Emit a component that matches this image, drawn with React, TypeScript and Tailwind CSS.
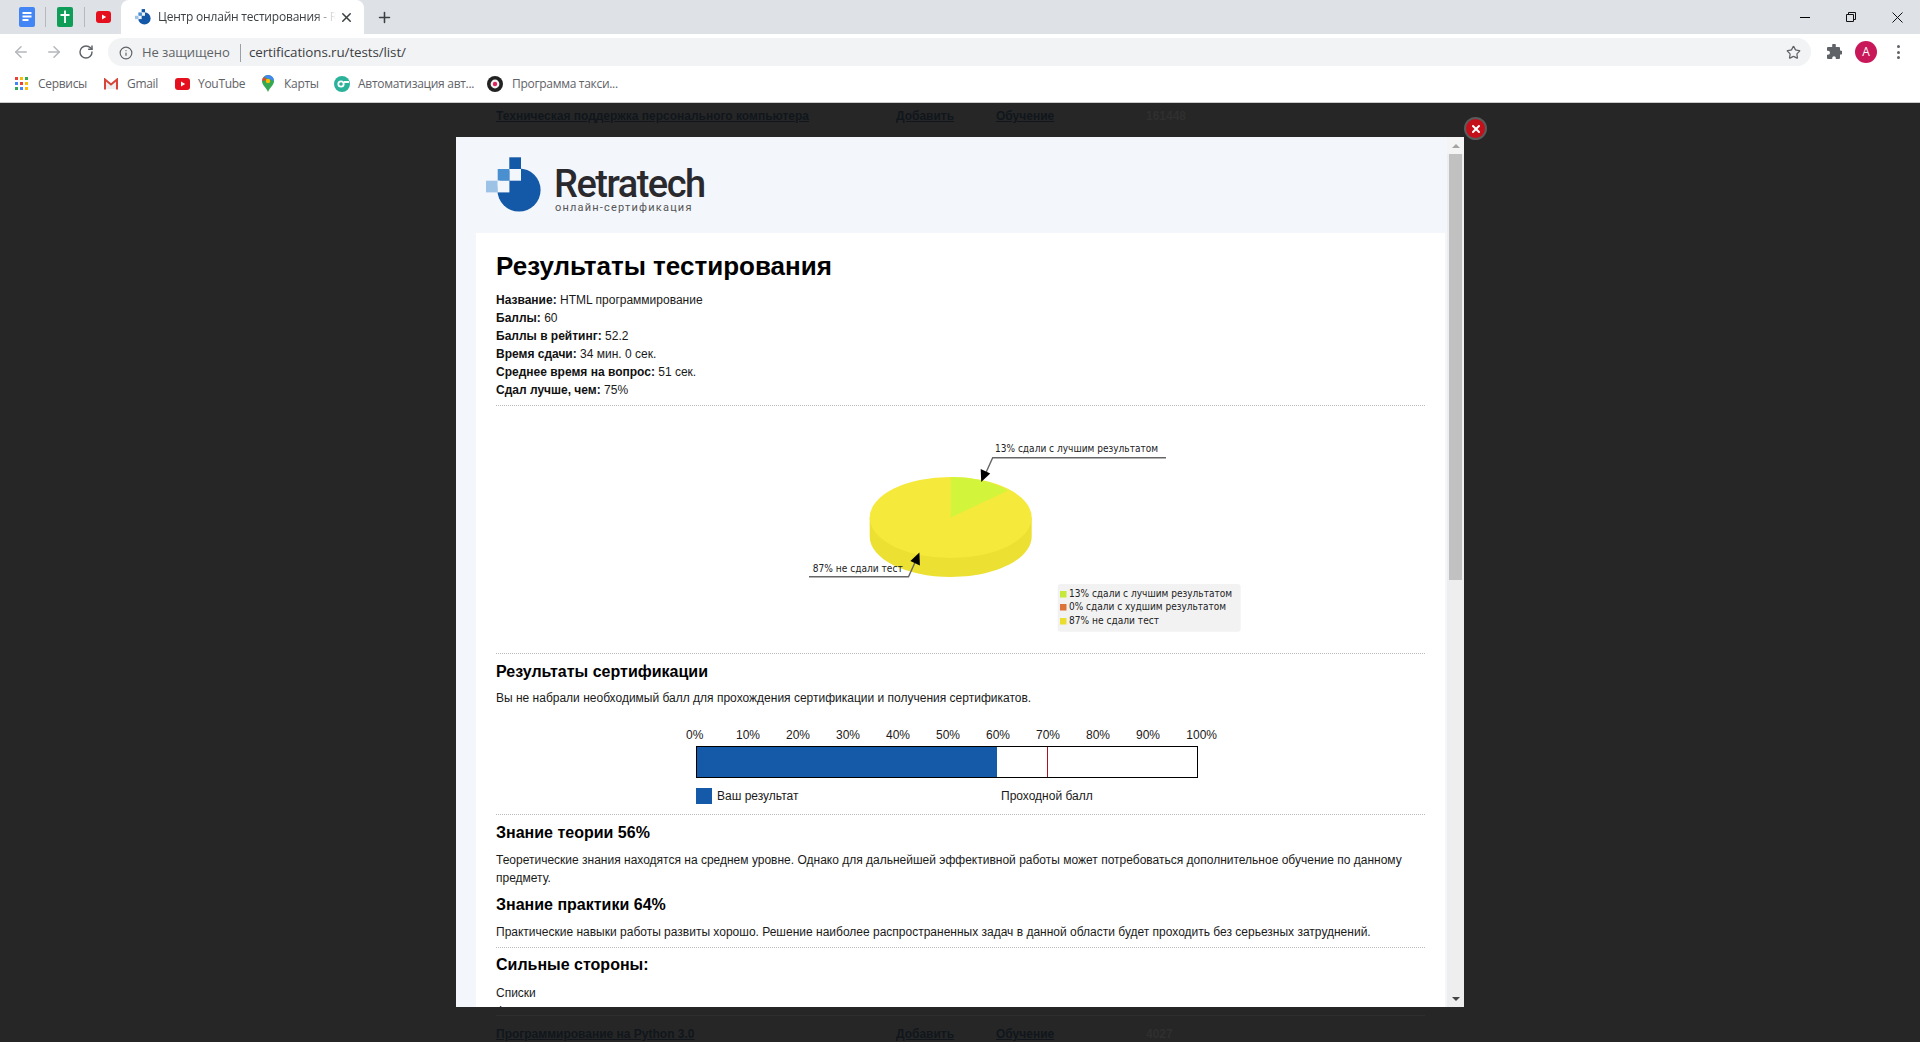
import { ArrowLeft, ArrowRight, Info, Plus, RotateCw, Star, X } from "lucide-react";

// ─── Browser chrome icons ─────────────────────────────────────
function DocsIcon() {
  return (
    <svg width="16" height="20" viewBox="0 0 16 20">
      <rect width="16" height="20" rx="2" fill="#4285f4" />
      <path d="M3.5 6h9M3.5 9.5h9M3.5 13h6" stroke="#fff" strokeWidth="1.8" />
    </svg>
  );
}

function SheetsIcon() {
  return (
    <svg width="16" height="20" viewBox="0 0 16 20">
      <rect width="16" height="20" rx="2" fill="#0f9d58" />
      <path d="M3.5 8h9M8 3.5V16" stroke="#fff" strokeWidth="1.8" />
    </svg>
  );
}

function YoutubeIcon() {
  return (
    <svg width="15" height="12" viewBox="0 0 15 12">
      <rect width="15" height="12" rx="3" fill="#e5101d" />
      <path d="M6 3.4v5.2L10.2 6z" fill="#fff" />
    </svg>
  );
}

function RetraMark({ size }: { size: number }) {
  return (
    <svg width={size} height={size} viewBox="486 157 56 56">
      <circle cx="519" cy="190" r="21.6" fill="#1459a8" />
      <rect x="509.3" y="157.3" width="11.7" height="11.7" fill="#1459a8" />
      <rect x="509.3" y="169" width="11.7" height="11.7" fill="#f3f7fc" />
      <rect x="497.7" y="169" width="11.7" height="11.7" fill="#4a8fd0" />
      <rect x="486" y="180.7" width="11.7" height="11.7" fill="#9cc3e6" />
      <rect x="497.7" y="180.7" width="11.7" height="11.7" fill="#f3f7fc" />
    </svg>
  );
}

function AppsIcon() {
  const colors = ["#ea4335", "#fbbc04", "#34a853", "#4285f4", "#ea4335", "#fbbc04", "#34a853", "#4285f4", "#fbbc04"];
  return (
    <div className="grid grid-cols-3 gap-[2px] w-[13px]">
      {colors.map((c, i) => (
        <span key={i} className="w-[3px] h-[3px]" style={{ backgroundColor: c }} />
      ))}
    </div>
  );
}

function GmailIcon() {
  return (
    <svg width="14" height="12" viewBox="0 0 14 12">
      <path d="M2 3l5 4 5-4v8H2z" fill="#eee" />
      <path d="M1 11.5V1.5L7 6.5L13 1.5V11.5" fill="none" stroke="#d8443a" strokeWidth="2" />
    </svg>
  );
}

function MapsIcon() {
  return (
    <svg width="12" height="17" viewBox="0 0 12 17">
      <path d="M6 0a6 6 0 0 1 6 6c0 4-4 6-6 11C4 12 0 10 0 6a6 6 0 0 1 6-6z" fill="#34a853" />
      <path d="M6 0a6 6 0 0 1 6 6L2 2a6 6 0 0 1 4-2z" fill="#4285f4" />
      <path d="M0 6a6 6 0 0 1 2-4l3 3z" fill="#ea4335" />
      <circle cx="6" cy="6" r="2.2" fill="#fbbc04" />
    </svg>
  );
}

function AutoIcon() {
  return (
    <svg width="16" height="16" viewBox="0 0 16 16">
      <circle cx="8" cy="8" r="8" fill="#2bb29b" />
      <circle cx="7" cy="8" r="3.6" fill="#fff" />
      <circle cx="7" cy="8" r="1.8" fill="#2bb29b" />
      <rect x="10" y="5" width="5" height="2" fill="#fff" />
    </svg>
  );
}

function TaxiIcon() {
  return (
    <svg width="16" height="16" viewBox="0 0 16 16">
      <circle cx="8" cy="8" r="8" fill="#222" />
      <circle cx="8" cy="8" r="4.4" fill="#f4f4f4" />
      <circle cx="8" cy="8" r="2.2" fill="#e0245e" />
    </svg>
  );
}

function PuzzleIcon() {
  return (
    <svg width="16" height="16" viewBox="0 0 16 16">
      <path
        d="M6.2 1.2a1.8 1.8 0 0 1 3.6 0V3H13a1 1 0 0 1 1 1v2.6h.6a2 2 0 0 1 0 4H14V14a1 1 0 0 1-1 1H9.8v-1a1.8 1.8 0 0 0-3.6 0v1H2a1 1 0 0 1-1-1v-3.2h1a2 2 0 0 0 0-4H1V4a1 1 0 0 1 1-1h4.2z"
        fill="#5f6368"
      />
    </svg>
  );
}

function Bookmark({ icon, label, gap, width }: { icon: React.ReactNode; label: string; gap: string; width: string }) {
  return (
    <div className={`flex items-center ${gap} ${width}`}>
      <div className="w-[16px] flex justify-center shrink-0">{icon}</div>
      <span className="text-[12px] text-[#5f6368] whitespace-nowrap font-['Open_Sans',sans-serif] tracking-[-0.3px]">{label}</span>
    </div>
  );
}

function BrowserChrome() {
  return (
    <div className="font-['Open_Sans',sans-serif]">
      {/* tab strip */}
      <div className="h-[34px] bg-[#dee1e6] flex items-end relative">
        <div className="flex items-center h-[34px] w-[121px] pl-[19px] shrink-0">
          <DocsIcon />
          <span className="w-px h-[20px] bg-[#b5b8bd] ml-[10px] mr-[11px]" />
          <SheetsIcon />
          <span className="w-px h-[20px] bg-[#b5b8bd] ml-[11px] mr-[11px]" />
          <YoutubeIcon />
        </div>
        <div className="w-[243px] h-[34px] bg-white rounded-t-[8px] flex items-center pl-[14px] shrink-0">
          <RetraMark size={16} />
          <span className="ml-[7px] text-[12px] text-[#3c4043] whitespace-nowrap overflow-hidden w-[178px] tracking-[-0.2px] [mask-image:linear-gradient(to_right,#000_88%,transparent)]">
            Центр онлайн тестирования - Retratech
          </span>
          <X size={15} strokeWidth={2.4} className="ml-[3px] text-[#3c4043]" />
        </div>
        <div className="h-[34px] flex items-center ml-[12px]">
          <Plus size={17} strokeWidth={2.2} className="text-[#3c4043]" />
        </div>
        <div className="ml-auto h-[34px] flex items-center text-[#111]">
          <div className="w-[46px] flex justify-center">
            <span className="w-[10px] h-px bg-black block" />
          </div>
          <div className="w-[46px] flex justify-center">
            <svg width="10" height="10" viewBox="0 0 10 10" fill="none" stroke="#111">
              <path d="M0.5 2.5h7v7h-7zM2.5 2.5V0.5h7v7h-2" />
            </svg>
          </div>
          <div className="w-[46px] flex justify-center">
            <svg width="11" height="11" viewBox="0 0 11 11" stroke="#111">
              <path d="M0.5 0.5l10 10M10.5 0.5l-10 10" />
            </svg>
          </div>
        </div>
      </div>

      {/* toolbar */}
      <div className="h-[32px] bg-white flex items-center pt-[4px]">
        <div className="w-[108px] flex items-center shrink-0">
          <ArrowLeft size={18} className="ml-[12px] text-[#b4b7bb]" />
          <ArrowRight size={18} className="ml-[15px] text-[#b4b7bb]" />
          <RotateCw size={16} strokeWidth={2.2} className="ml-[15px] text-[#5f6368]" />
        </div>
        <div className="w-[1703px] h-[28px] rounded-full bg-[#f1f3f4] flex items-center pl-[11px] pr-[10px] shrink-0 pt-px">
          <Info size={14} className="text-[#5f6368]" />
          <span className="ml-[9px] text-[13px] text-[#5f6368] tracking-[-0.1px] whitespace-nowrap w-[89px]">Не защищено</span>
          <span className="ml-[9px] w-px h-[18px] bg-[#9aa0a6]" />
          <span className="ml-[8px] text-[13.4px] text-[#3c4043] tracking-[-0.1px] whitespace-nowrap">certifications.ru/tests/list/</span>
          <Star size={15} strokeWidth={2} className="ml-auto text-[#5f6368]" />
        </div>
        <div className="ml-[15px] flex items-center">
          <PuzzleIcon />
        </div>
        <div className="ml-[13px] w-[22px] h-[22px] rounded-full bg-[#c8185a] text-white text-[12px] flex items-center justify-center">A</div>
        <div className="ml-[20px] flex flex-col gap-[2.5px]">
          <span className="w-[3px] h-[3px] rounded-full bg-[#5f6368]" />
          <span className="w-[3px] h-[3px] rounded-full bg-[#5f6368]" />
          <span className="w-[3px] h-[3px] rounded-full bg-[#5f6368]" />
        </div>
      </div>

      {/* bookmarks */}
      <div className="h-[37px] bg-white border-b border-[#ccc] flex items-center pl-[13px] pb-px">
        <Bookmark icon={<AppsIcon />} label="Сервисы" gap="gap-[9px]" width="w-[90px]" />
        <Bookmark icon={<GmailIcon />} label="Gmail" gap="gap-[8px]" width="w-[71px]" />
        <Bookmark icon={<YoutubeIcon />} label="YouTube" gap="gap-[8px]" width="w-[86px]" />
        <Bookmark icon={<MapsIcon />} label="Карты" gap="gap-[8px]" width="w-[74px]" />
        <Bookmark icon={<AutoIcon />} label="Автоматизация авт..." gap="gap-[8px]" width="w-[153px]" />
        <Bookmark icon={<TaxiIcon />} label="Программа такси..." gap="gap-[9px]" width="w-[140px]" />
      </div>
    </div>
  );
}

// ─── Page behind the overlay ──────────────────────────────────
function BackRow({ title, count }: { title: string; count: string }) {
  return (
    <div className="flex items-center h-[16px] text-[12px] font-bold text-[#10161c]">
      <span className="w-[400px] underline whitespace-nowrap">{title}</span>
      <span className="w-[100px] underline">Добавить</span>
      <span className="w-[150px] underline">Обучение</span>
      <span className="text-[#2f2f2f]">{count}</span>
    </div>
  );
}

// ─── Charts ───────────────────────────────────────────────────
function PieChart() {
  return (
    <svg width="450" height="210" viewBox="800 430 450 210" className="ml-[304px] font-['DejaVu_Sans',sans-serif]">
      <path d="M869.7 517.5v19c0 22.4 36.3 40.5 81 40.5s81-18.1 81-40.5v-19z" fill="#ece032" />
      <ellipse cx="950.7" cy="517.5" rx="81" ry="40.5" fill="#f5e93c" />
      <path d="M950.7 517.5V477c22 0 42 4.6 57.3 13.5z" fill="#d2f53c" />
      <path d="M1166 457.7H992.7L984 477" fill="none" stroke="#666" strokeWidth="1.4" />
      <path d="M981.2 482l-0.5-13 9.5 4.5z" fill="#000" />
      <path d="M809 576.7H908.5L917 558" fill="none" stroke="#666" strokeWidth="1.4" />
      <path d="M919.4 552.6l0.5 13-9.5-4.5z" fill="#000" />
      <text x="995" y="451.5" fontSize="10.5" textLength="163" lengthAdjust="spacingAndGlyphs" fill="#222">13% сдали с лучшим результатом</text>
      <text x="812.7" y="572" fontSize="10.5" textLength="90" lengthAdjust="spacingAndGlyphs" fill="#222">87% не сдали тест</text>
      <rect x="1057.7" y="584" width="183" height="47.7" rx="3" fill="#f2f2f2" />
      <rect x="1060" y="591" width="6.5" height="6.5" fill="#c5e83a" />
      <rect x="1060" y="604" width="6.5" height="6.5" fill="#dc7338" />
      <rect x="1060" y="618" width="6.5" height="6.5" fill="#eadd2e" />
      <text x="1069" y="597" fontSize="10.5" textLength="163" lengthAdjust="spacingAndGlyphs" fill="#222">13% сдали с лучшим результатом</text>
      <text x="1069" y="610" fontSize="10.5" textLength="157" lengthAdjust="spacingAndGlyphs" fill="#222">0% сдали с худшим результатом</text>
      <text x="1069" y="624" fontSize="10.5" textLength="90" lengthAdjust="spacingAndGlyphs" fill="#222">87% не сдали тест</text>
    </svg>
  );
}

const SCALE = ["10%", "20%", "30%", "40%", "50%", "60%", "70%", "80%", "90%"];

function ResultBar() {
  return (
    <div>
      <div className="flex ml-[190px] mt-[19px] h-[18px] items-center">
        <span className="w-[37px]">0%</span>
        {SCALE.map((s) => (
          <span key={s} className="w-[50px] text-center">{s}</span>
        ))}
        <span className="w-[44px] text-right">100%</span>
      </div>
      <div className="relative ml-[200px] mt-[2px] w-[502px] h-[32px] border border-black">
        <div className="h-full w-[60%] bg-[#145aa8]" />
        <span className="absolute top-0 bottom-0 left-[70%] w-px bg-[#a8141b]" />
      </div>
      <div className="flex items-center ml-[200px] mt-[10px] h-[16px]">
        <span className="w-[16px] h-[16px] bg-[#145aa8]" />
        <span className="ml-[5px] w-[284px]">Ваш результат</span>
        <span>Проходной балл</span>
      </div>
    </div>
  );
}

const INFO = [
  ["Название:", "HTML программирование"],
  ["Баллы:", "60"],
  ["Баллы в рейтинг:", "52.2"],
  ["Время сдачи:", "34 мин. 0 сек."],
  ["Среднее время на вопрос:", "51 сек."],
  ["Сдал лучше, чем:", "75%"],
];

function Modal() {
  return (
    <div className="absolute left-[456px] top-[34px] w-[1008px] h-[870px] bg-[#f3f7fc] flex font-['Liberation_Sans',Arial,sans-serif] text-[12px] text-[#1a1a1a]">
      <div className="w-[991px] h-full overflow-hidden">
        {/* logo */}
        <div className="h-[96px] flex items-start pl-[30px] pt-[20px]">
          <RetraMark size={56} />
          <div className="ml-[12px] mt-[8px]">
            <div className="text-[38px] leading-[38px] font-['Roboto',sans-serif] font-medium text-[#2a2a2e] tracking-[-1.5px]">Retratech</div>
            <div className="text-[11px] leading-[12px] -mt-px ml-px text-[#555] tracking-[1.2px] font-['Roboto',sans-serif]">онлайн-сертификация</div>
          </div>
        </div>

        {/* body */}
        <div className="ml-[20px] mr-[2px] bg-white pl-[20px] pr-[20px] pt-[18px] leading-[18px]">
          <h1 className="text-[26px] leading-[30px] font-bold text-black">Результаты тестирования</h1>
          <div className="mt-[10px] pb-[6px] border-b border-dotted border-[#bbb]">
            {INFO.map(([k, v]) => (
              <div key={k} className="h-[18px]">
                <b className="font-bold text-[#111]">{k}</b> {v}
              </div>
            ))}
          </div>

          <div className="pt-[24px] pb-[13px] border-b border-dotted border-[#bbb]">
            <PieChart />
          </div>

          <div className="pb-[10px] border-b border-dotted border-[#bbb]">
            <h2 className="mt-[8px] text-[16px] leading-[20px] font-bold text-black">Результаты сертификации</h2>
            <p className="mt-[7px]">Вы не набрали необходимый балл для прохождения сертификации и получения сертификатов.</p>
            <ResultBar />
          </div>

          <div className="pb-[6px] border-b border-dotted border-[#bbb]">
            <h2 className="mt-[8px] text-[16px] leading-[20px] font-bold text-black">Знание теории 56%</h2>
            <p className="mt-[8px]">
              Теоретические знания находятся на среднем уровне. Однако для дальнейшей эффективной работы может потребоваться дополнительное обучение по данному предмету.
            </p>
            <h2 className="mt-[8px] text-[16px] leading-[20px] font-bold text-black">Знание практики 64%</h2>
            <p className="mt-[8px]">
              Практические навыки работы развиты хорошо. Решение наиболее распространенных задач в данной области будет проходить без серьезных затруднений.
            </p>
          </div>

          <h2 className="mt-[7px] text-[16px] leading-[20px] font-bold text-black">Сильные стороны:</h2>
          <p className="mt-[9px]">Списки</p>
          <p>Формы</p>
        </div>
      </div>

      {/* scrollbar */}
      <div className="w-[17px] h-full bg-[#eeeeee] flex flex-col items-center relative">
        <div className="h-[17px] w-full bg-[#f4f4f4] flex items-center justify-center">
          <span className="w-0 h-0 border-x-[4px] border-x-transparent border-b-[4px] border-b-[#a3a3a3]" />
        </div>
        <div className="w-[13px] h-[426px] bg-[#c1c1c1]" />
        <div className="mt-auto h-[17px] w-full flex items-center justify-center">
          <span className="w-0 h-0 border-x-[4px] border-x-transparent border-t-[4px] border-t-[#444]" />
        </div>
      </div>

      {/* close */}
      <div className="absolute -top-[20px] -right-[23px] w-[23px] h-[23px] rounded-full bg-[#c4101a] border-2 border-[#5a5a5a] flex items-center justify-center">
        <X size={12} strokeWidth={4} className="text-white" />
      </div>
    </div>
  );
}

export default function App() {
  return (
    <div className="w-[1920px] h-[1042px] overflow-hidden flex flex-col">
      <BrowserChrome />
      <div className="relative flex-1 bg-[#262626] font-['Liberation_Sans',Arial,sans-serif]">
        <div className="ml-[496px] mr-[495px] h-full flex flex-col justify-between pt-[5px]">
          <BackRow title="Техническая поддержка персонального компьютера" count="161448" />
          <div className="border-t border-[#2e2e2e] pt-[10px]">
            <BackRow title="Программирование на Python 3.0" count="4027" />
          </div>
        </div>
        <Modal />
      </div>
    </div>
  );
}
